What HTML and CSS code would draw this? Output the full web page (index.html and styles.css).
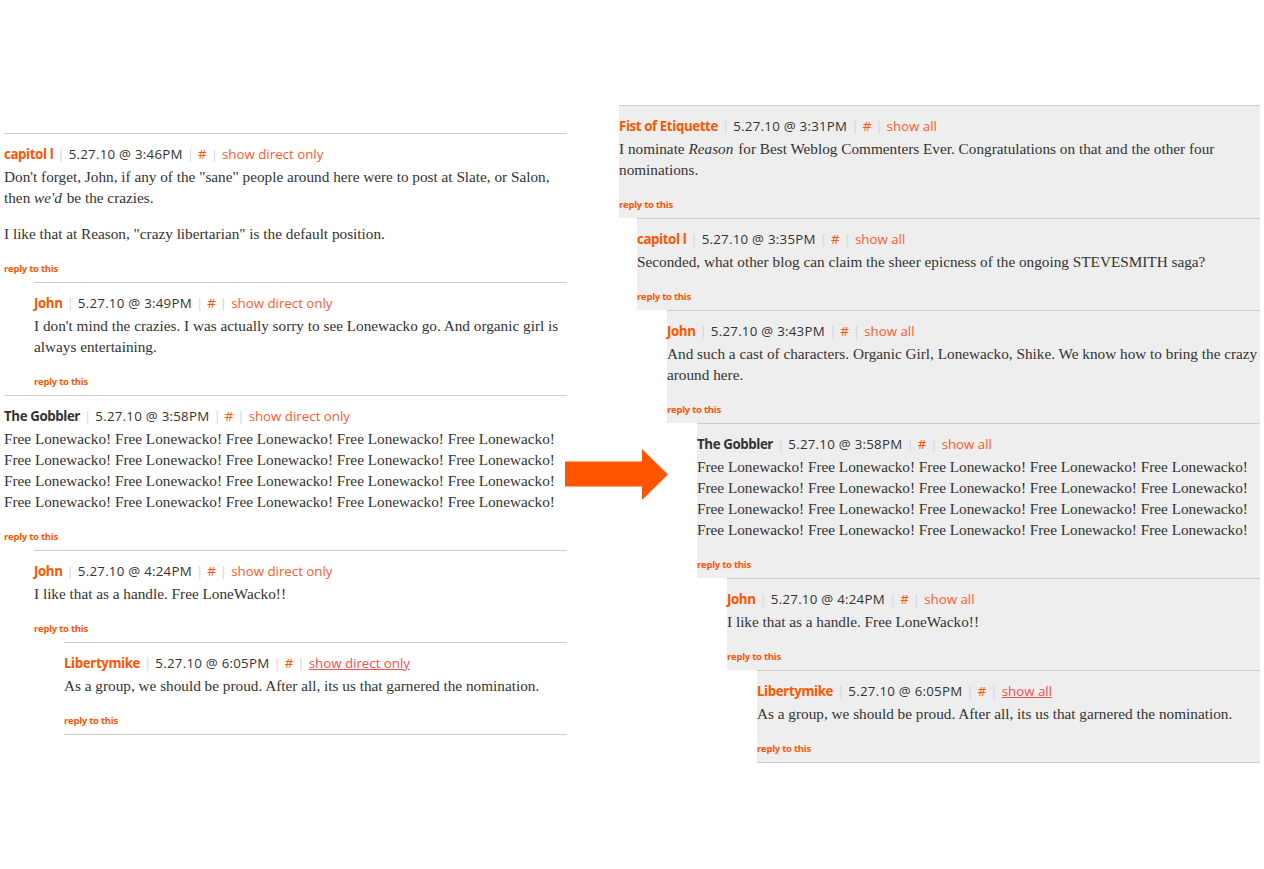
FILE: index.html
```html
<!DOCTYPE html>
<html>
<head>
<meta charset="utf-8">
<link rel="stylesheet" href="styles.css">
</head>
<body>
<div class="page">
  <div class="thread thread-left">
    <div class="comment">
      <div class="meta"><a class="name">capitol l</a><span class="sep">|</span><span class="date">5.27.10 @ 3:46PM</span><span class="sep">|</span><a class="hash">#</a><span class="sep">|</span><a class="show">show direct only</a></div>
      <div class="body"><p>Don't forget, John, if any of the "sane" people around here were to post at Slate, or Salon, then <em>we'd</em> be the crazies.</p><p>I like that at Reason, "crazy libertarian" is the default position.</p></div>
      <a class="reply">reply to this</a>
    </div>
    <div class="comment l1">
      <div class="meta"><a class="name">John</a><span class="sep">|</span><span class="date">5.27.10 @ 3:49PM</span><span class="sep">|</span><a class="hash">#</a><span class="sep">|</span><a class="show">show direct only</a></div>
      <div class="body"><p>I don't mind the crazies. I was actually sorry to see Lonewacko go. And organic girl is always entertaining.</p></div>
      <a class="reply">reply to this</a>
    </div>
    <div class="comment">
      <div class="meta"><span class="name plain">The Gobbler</span><span class="sep">|</span><span class="date">5.27.10 @ 3:58PM</span><span class="sep">|</span><a class="hash">#</a><span class="sep">|</span><a class="show">show direct only</a></div>
      <div class="body"><p>Free Lonewacko! Free Lonewacko! Free Lonewacko! Free Lonewacko! Free Lonewacko! Free Lonewacko! Free Lonewacko! Free Lonewacko! Free Lonewacko! Free Lonewacko! Free Lonewacko! Free Lonewacko! Free Lonewacko! Free Lonewacko! Free Lonewacko! Free Lonewacko! Free Lonewacko! Free Lonewacko! Free Lonewacko! Free Lonewacko!</p></div>
      <a class="reply">reply to this</a>
    </div>
    <div class="comment l1">
      <div class="meta"><a class="name">John</a><span class="sep">|</span><span class="date">5.27.10 @ 4:24PM</span><span class="sep">|</span><a class="hash">#</a><span class="sep">|</span><a class="show">show direct only</a></div>
      <div class="body"><p>I like that as a handle. Free LoneWacko!!</p></div>
      <a class="reply">reply to this</a>
    </div>
    <div class="comment l2 last">
      <div class="meta"><a class="name">Libertymike</a><span class="sep">|</span><span class="date">5.27.10 @ 6:05PM</span><span class="sep">|</span><a class="hash">#</a><span class="sep">|</span><a class="show hover">show direct only</a></div>
      <div class="body"><p>As a group, we should be proud. After all, its us that garnered the nomination.</p></div>
      <a class="reply">reply to this</a>
    </div>
  </div>

  <div class="thread thread-right">
    <div class="comment gray">
      <div class="meta"><a class="name">Fist of Etiquette</a><span class="sep">|</span><span class="date">5.27.10 @ 3:31PM</span><span class="sep">|</span><a class="hash">#</a><span class="sep">|</span><a class="show">show all</a></div>
      <div class="body"><p>I nominate <em>Reason</em> for Best Weblog Commenters Ever. Congratulations on that and the other four nominations.</p></div>
      <a class="reply">reply to this</a>
    </div>
    <div class="comment gray r1">
      <div class="meta"><a class="name">capitol l</a><span class="sep">|</span><span class="date">5.27.10 @ 3:35PM</span><span class="sep">|</span><a class="hash">#</a><span class="sep">|</span><a class="show">show all</a></div>
      <div class="body"><p>Seconded, what other blog can claim the sheer epicness of the ongoing STEVESMITH saga?</p></div>
      <a class="reply">reply to this</a>
    </div>
    <div class="comment gray r2">
      <div class="meta"><a class="name">John</a><span class="sep">|</span><span class="date">5.27.10 @ 3:43PM</span><span class="sep">|</span><a class="hash">#</a><span class="sep">|</span><a class="show">show all</a></div>
      <div class="body"><p>And such a cast of characters. Organic Girl, Lonewacko, Shike. We know how to bring the crazy around here.</p></div>
      <a class="reply">reply to this</a>
    </div>
    <div class="comment gray r3">
      <div class="meta"><span class="name plain">The Gobbler</span><span class="sep">|</span><span class="date">5.27.10 @ 3:58PM</span><span class="sep">|</span><a class="hash">#</a><span class="sep">|</span><a class="show">show all</a></div>
      <div class="body"><p>Free Lonewacko! Free Lonewacko! Free Lonewacko! Free Lonewacko! Free Lonewacko! Free Lonewacko! Free Lonewacko! Free Lonewacko! Free Lonewacko! Free Lonewacko! Free Lonewacko! Free Lonewacko! Free Lonewacko! Free Lonewacko! Free Lonewacko! Free Lonewacko! Free Lonewacko! Free Lonewacko! Free Lonewacko! Free Lonewacko!</p></div>
      <a class="reply">reply to this</a>
    </div>
    <div class="comment gray r4">
      <div class="meta"><a class="name">John</a><span class="sep">|</span><span class="date">5.27.10 @ 4:24PM</span><span class="sep">|</span><a class="hash">#</a><span class="sep">|</span><a class="show">show all</a></div>
      <div class="body"><p>I like that as a handle. Free LoneWacko!!</p></div>
      <a class="reply">reply to this</a>
    </div>
    <div class="comment gray r5 last">
      <div class="meta"><a class="name">Libertymike</a><span class="sep">|</span><span class="date">5.27.10 @ 6:05PM</span><span class="sep">|</span><a class="hash">#</a><span class="sep">|</span><a class="show hover">show all</a></div>
      <div class="body"><p>As a group, we should be proud. After all, its us that garnered the nomination.</p></div>
      <a class="reply">reply to this</a>
    </div>
  </div>

  <svg class="arrow" width="103" height="51" viewBox="0 0 103 51"><polygon points="0,12.5 77,12.5 77,0 103,25.5 77,51 77,37.5 0,37.5" fill="#ff5500"/></svg>
</div>
</body>
</html>
```

FILE: styles.css
```css
* { box-sizing: border-box; }
html, body { margin: 0; padding: 0; background: #fff; }
body { font-family: "Liberation Serif", serif; color: #333; }
.page { position: relative; display: flex; align-items: flex-start; width: 1264px; height: 869px; }
.thread { display: flex; flex-direction: column; }
.thread-left { margin-top: 133px; margin-left: 4px; width: 563px; }
.thread-right { margin-top: 105px; margin-left: 52px; width: 641px; }
.comment { border-top: 1px solid #cccccc; padding: 10px 0 7px 0; display: flex; flex-direction: column; align-items: flex-start; }
.comment.last { border-bottom: 1px solid #cccccc; }
.comment.gray { background: #eeeeee; }
.l1 { margin-left: 30px; }
.l2 { margin-left: 60px; }
.r1 { margin-left: 18px; }
.r2 { margin-left: 48px; }
.r3 { margin-left: 78px; }
.r4 { margin-left: 108px; }
.r5 { margin-left: 138px; }
.meta { font-family: "Open Sans", sans-serif; font-size: 13.3px; line-height: 20px; height: 20px; color: #333; white-space: nowrap; }
.name { color: #ff5500; font-weight: bold; letter-spacing: -0.4px; }
.name.plain { color: #333; }
.sep { color: #cfd6de; padding: 0 4px; }
.date { color: #333; letter-spacing: 0.25px; }
.hash { color: #ff5500; }
.show { color: #ff5a2c; }
.show.hover { text-decoration: underline; color: #f2504a; }
.body { margin-top: 2px; font-size: 15.25px; line-height: 21px; }
.body p { margin: 0 0 15px 0; }
.body p:last-child { margin-bottom: 0; }
.body em { margin-right: 1px; }
.reply { margin-top: 19px; font-family: "Open Sans", sans-serif; font-weight: bold; font-size: 9.5px; line-height: 12px; color: #ff5500; letter-spacing: -0.25px; }
.arrow { position: absolute; left: 565px; top: 449px; }
```
